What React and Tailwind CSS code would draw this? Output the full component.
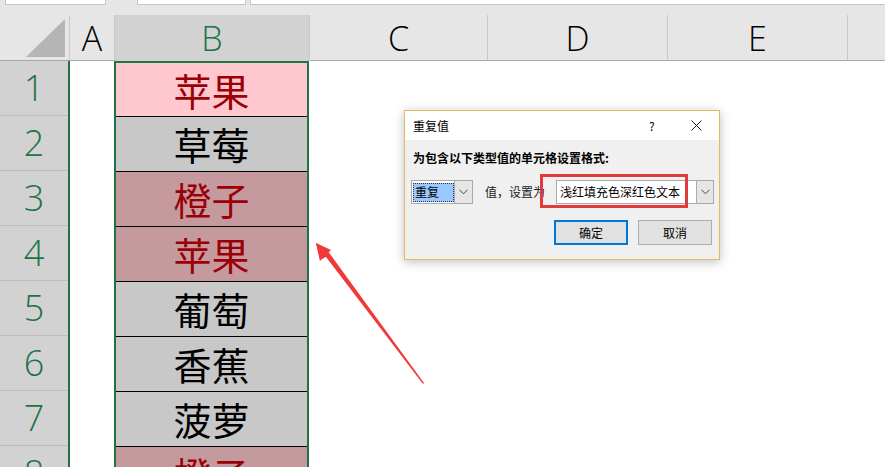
import React from "react";

const CJK = { fontFamily: '"Noto Sans CJK SC", "Noto Sans", sans-serif' };

const rows = [
  { n: 1, t: "苹果", bg: "bg-[#ffc7ce]", c: "text-[#9c0006]" },
  { n: 2, t: "草莓", bg: "bg-[#c8c8c8]", c: "text-black" },
  { n: 3, t: "橙子", bg: "bg-[#c59a9e]", c: "text-[#9c0006]" },
  { n: 4, t: "苹果", bg: "bg-[#c59a9e]", c: "text-[#9c0006]" },
  { n: 5, t: "葡萄", bg: "bg-[#c8c8c8]", c: "text-black" },
  { n: 6, t: "香蕉", bg: "bg-[#c8c8c8]", c: "text-black" },
  { n: 7, t: "菠萝", bg: "bg-[#c8c8c8]", c: "text-black" },
  { n: 8, t: "橙子", bg: "bg-[#c59a9e]", c: "text-[#9c0006]" },
];

function Chevron() {
  return (
    <svg width="9" height="6" viewBox="0 0 9 6">
      <polyline points="0.5,0.8 4.5,4.8 8.5,0.8" fill="none" stroke="#444" strokeWidth="1" />
    </svg>
  );
}

function HeaderCell({ w, label, active }) {
  return (
    <div
      className={`${w} h-full flex items-center justify-center border-r border-[#c8c8c8] ${
        active ? "bg-[#d2d2d2] text-[#217346]" : "border-b border-b-[#a8a8a8] text-black"
      }`}
    >
      <span className="text-[34px] font-light leading-none">{label}</span>
    </div>
  );
}

export default function App() {
  return (
    <div
      className="relative w-[885px] h-[467px] overflow-hidden bg-white"
      style={{ fontFamily: '"Open Sans", "Noto Sans", sans-serif' }}
    >
      {/* top strip */}
      <div className="h-[15px] bg-[#e6e6e6] flex items-start">
        <div className="ml-[5px] w-[101px] h-[5px] bg-white border border-t-0 border-[#c6c6c6]" />
        <div className="ml-[31px] w-[109px] h-[5px] bg-white border border-t-0 border-[#c6c6c6]" />
        <div className="ml-[4px] flex-1 h-[5px] bg-white border border-t-0 border-r-0 border-[#c6c6c6]" />
      </div>

      {/* column header row */}
      <div className="h-[46px] flex bg-[#e6e6e6]">
        <div className="w-[70px] h-full border-r border-[#c8c8c8] border-b border-b-[#a8a8a8] flex items-end justify-end pr-[3px] pb-[3px]">
          <svg width="40" height="38" viewBox="0 0 40 38">
            <polygon points="0,38 39,38 39,0" fill="#b5b5b5" />
          </svg>
        </div>
        <HeaderCell w="w-[45px]" label="A" />
        <HeaderCell w="w-[195px]" label="B" active />
        <HeaderCell w="w-[178px]" label="C" />
        <HeaderCell w="w-[180px]" label="D" />
        <HeaderCell w="w-[180px]" label="E" />
        <div className="flex-1 h-full border-b border-[#a8a8a8]" />
      </div>

      {/* body */}
      <div className="flex">
        {/* row headers */}
        <div className="w-[70px] flex flex-col bg-[#d2d2d2] border-r-2 border-[#217346]">
          {rows.map((r) => (
            <div
              key={r.n}
              className="h-[55px] shrink-0 flex items-center justify-center border-b border-[#bcbcbc] text-[#217346]"
            >
              <span className="text-[36px] font-light leading-none">{r.n}</span>
            </div>
          ))}
        </div>
        {/* column A */}
        <div className="w-[44px]" />
        {/* column B */}
        <div className="w-[195px] border-2 border-[#217346] flex flex-col" style={CJK}>
          {rows.map((r, i) => (
            <div
              key={r.n}
              className={`${i === 0 ? "h-[53px]" : "h-[55px] border-t border-black"} shrink-0 flex items-center justify-center ${r.bg} ${r.c}`}
            >
              <span className="text-[38px] leading-none">{r.t}</span>
            </div>
          ))}
        </div>
        <div className="flex-1" />
      </div>

      {/* arrow */}
      <svg className="absolute left-[300px] top-[230px]" width="140" height="170" viewBox="0 0 140 170">
        <polygon points="16,13 26,19 30,24 124,153 123,154 26,27 20,30" fill="#f03a3a" />
        <polygon points="16,13 31,20 20,31" fill="#f03a3a" />
      </svg>

      {/* dialog */}
      <div
        className="absolute left-[404px] top-[110px] w-[316px] h-[150px] border border-[#e5b95c] bg-[#f0f0f0] shadow-[0_2px_10px_rgba(0,0,0,0.25)] flex flex-col text-[12px] text-black"
        style={CJK}
      >
        <div className="h-[29px] bg-white flex items-center pl-[8px]">
          <span className="flex-1">重复值</span>
          <span className="w-[14px] mr-[28px] text-[12px]">?</span>
          <svg className="mr-[17px]" width="11" height="11" viewBox="0 0 11 11">
            <line x1="0.5" y1="0.5" x2="10.5" y2="10.5" stroke="#222" strokeWidth="1" />
            <line x1="10.5" y1="0.5" x2="0.5" y2="10.5" stroke="#222" strokeWidth="1" />
          </svg>
        </div>
        <div className="pl-[8px] pt-[10px] font-bold leading-[16px]">为包含以下类型值的单元格设置格式:</div>
        <div className="flex items-center mt-[14px] pl-[6px] relative">
          <div className="w-[62px] h-[24px] bg-white border border-[#a9a9a9] flex items-center">
            <div className="ml-[1px] w-[41px] h-[19px] bg-[#99c9ff] border border-dotted border-[#333] flex items-center pl-[1px] leading-none">
              重复
            </div>
            <div className="ml-auto w-[18px] h-[22px] bg-[#e5e5e5] border-l border-[#adadad] flex items-center justify-center">
              <Chevron />
            </div>
          </div>
          <span className="ml-[12px] text-[#222]">值，设置为</span>
          <div className="ml-[11px] w-[158px] h-[24px] bg-white border border-[#a9a9a9] flex items-center">
            <span className="pl-[3px]">浅红填充色深红色文本</span>
            <div className="ml-auto w-[17px] h-[22px] bg-[#e5e5e5] border-l border-[#adadad] flex items-center justify-center">
              <Chevron />
            </div>
          </div>
          <div className="absolute left-[135px] top-[-6px] w-[148px] h-[34px] border-[3px] border-[#e23a3a]" />
        </div>
        <div className="flex justify-end pr-[7px] mt-[16px] gap-[10px]">
          <button className="w-[74px] h-[25px] bg-[#e1e1e1] border-2 border-[#0078d7] flex items-center justify-center">
            确定
          </button>
          <button className="w-[74px] h-[25px] bg-[#e1e1e1] border border-[#adadad] flex items-center justify-center">
            取消
          </button>
        </div>
      </div>
    </div>
  );
}
